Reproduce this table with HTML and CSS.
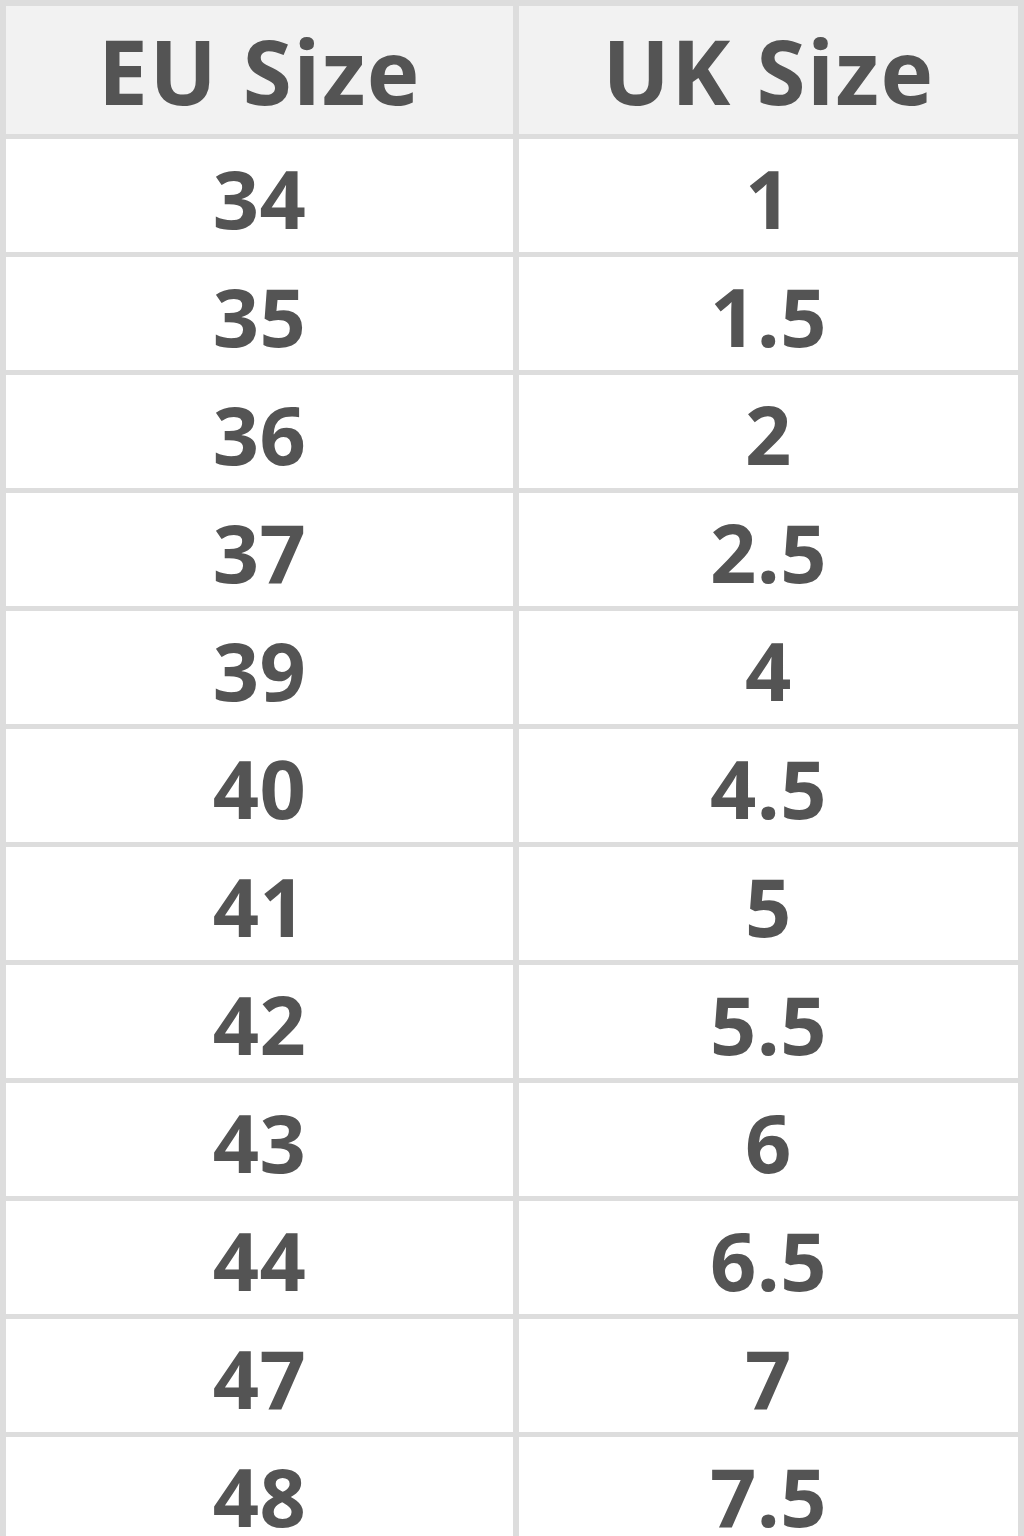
FILE: index.html
```html
<!DOCTYPE html>
<html>
<head>
<meta charset="utf-8">
<link rel="stylesheet" href="styles.css">
</head>
<body>
<div class="table">
  <div class="cell head">EU Size</div><div class="cell head">UK Size</div>
  <div class="cell">34</div><div class="cell">1</div>
  <div class="cell">35</div><div class="cell">1.5</div>
  <div class="cell">36</div><div class="cell">2</div>
  <div class="cell">37</div><div class="cell">2.5</div>
  <div class="cell">39</div><div class="cell">4</div>
  <div class="cell">40</div><div class="cell">4.5</div>
  <div class="cell">41</div><div class="cell">5</div>
  <div class="cell">42</div><div class="cell">5.5</div>
  <div class="cell">43</div><div class="cell">6</div>
  <div class="cell">44</div><div class="cell">6.5</div>
  <div class="cell">47</div><div class="cell">7</div>
  <div class="cell">48</div><div class="cell">7.5</div>
</div>
</body>
</html>
```

FILE: styles.css
```css
html, body {
  margin: 0;
  padding: 0;
  background: #dddddd;
}
.table {
  display: grid;
  grid-template-columns: 507px 499px;
  grid-template-rows: 128px;
  grid-auto-rows: 113px;
  gap: 5px 6px;
  padding: 6px 6px 0 6px;
  background: #dddddd;
  width: 1024px;
  box-sizing: border-box;
  font-family: "Open Sans", sans-serif;
  font-weight: 660;
  color: #545454;
}
.cell {
  background: #ffffff;
  display: flex;
  align-items: center;
  justify-content: center;
  font-size: 81px;
  letter-spacing: 0.5px;
  line-height: 1;
  padding-top: 4px;
  box-sizing: border-box;
}
.head {
  background: #f2f2f2;
  font-size: 89px;
  letter-spacing: 1.5px;
  padding-top: 0;
}
```
